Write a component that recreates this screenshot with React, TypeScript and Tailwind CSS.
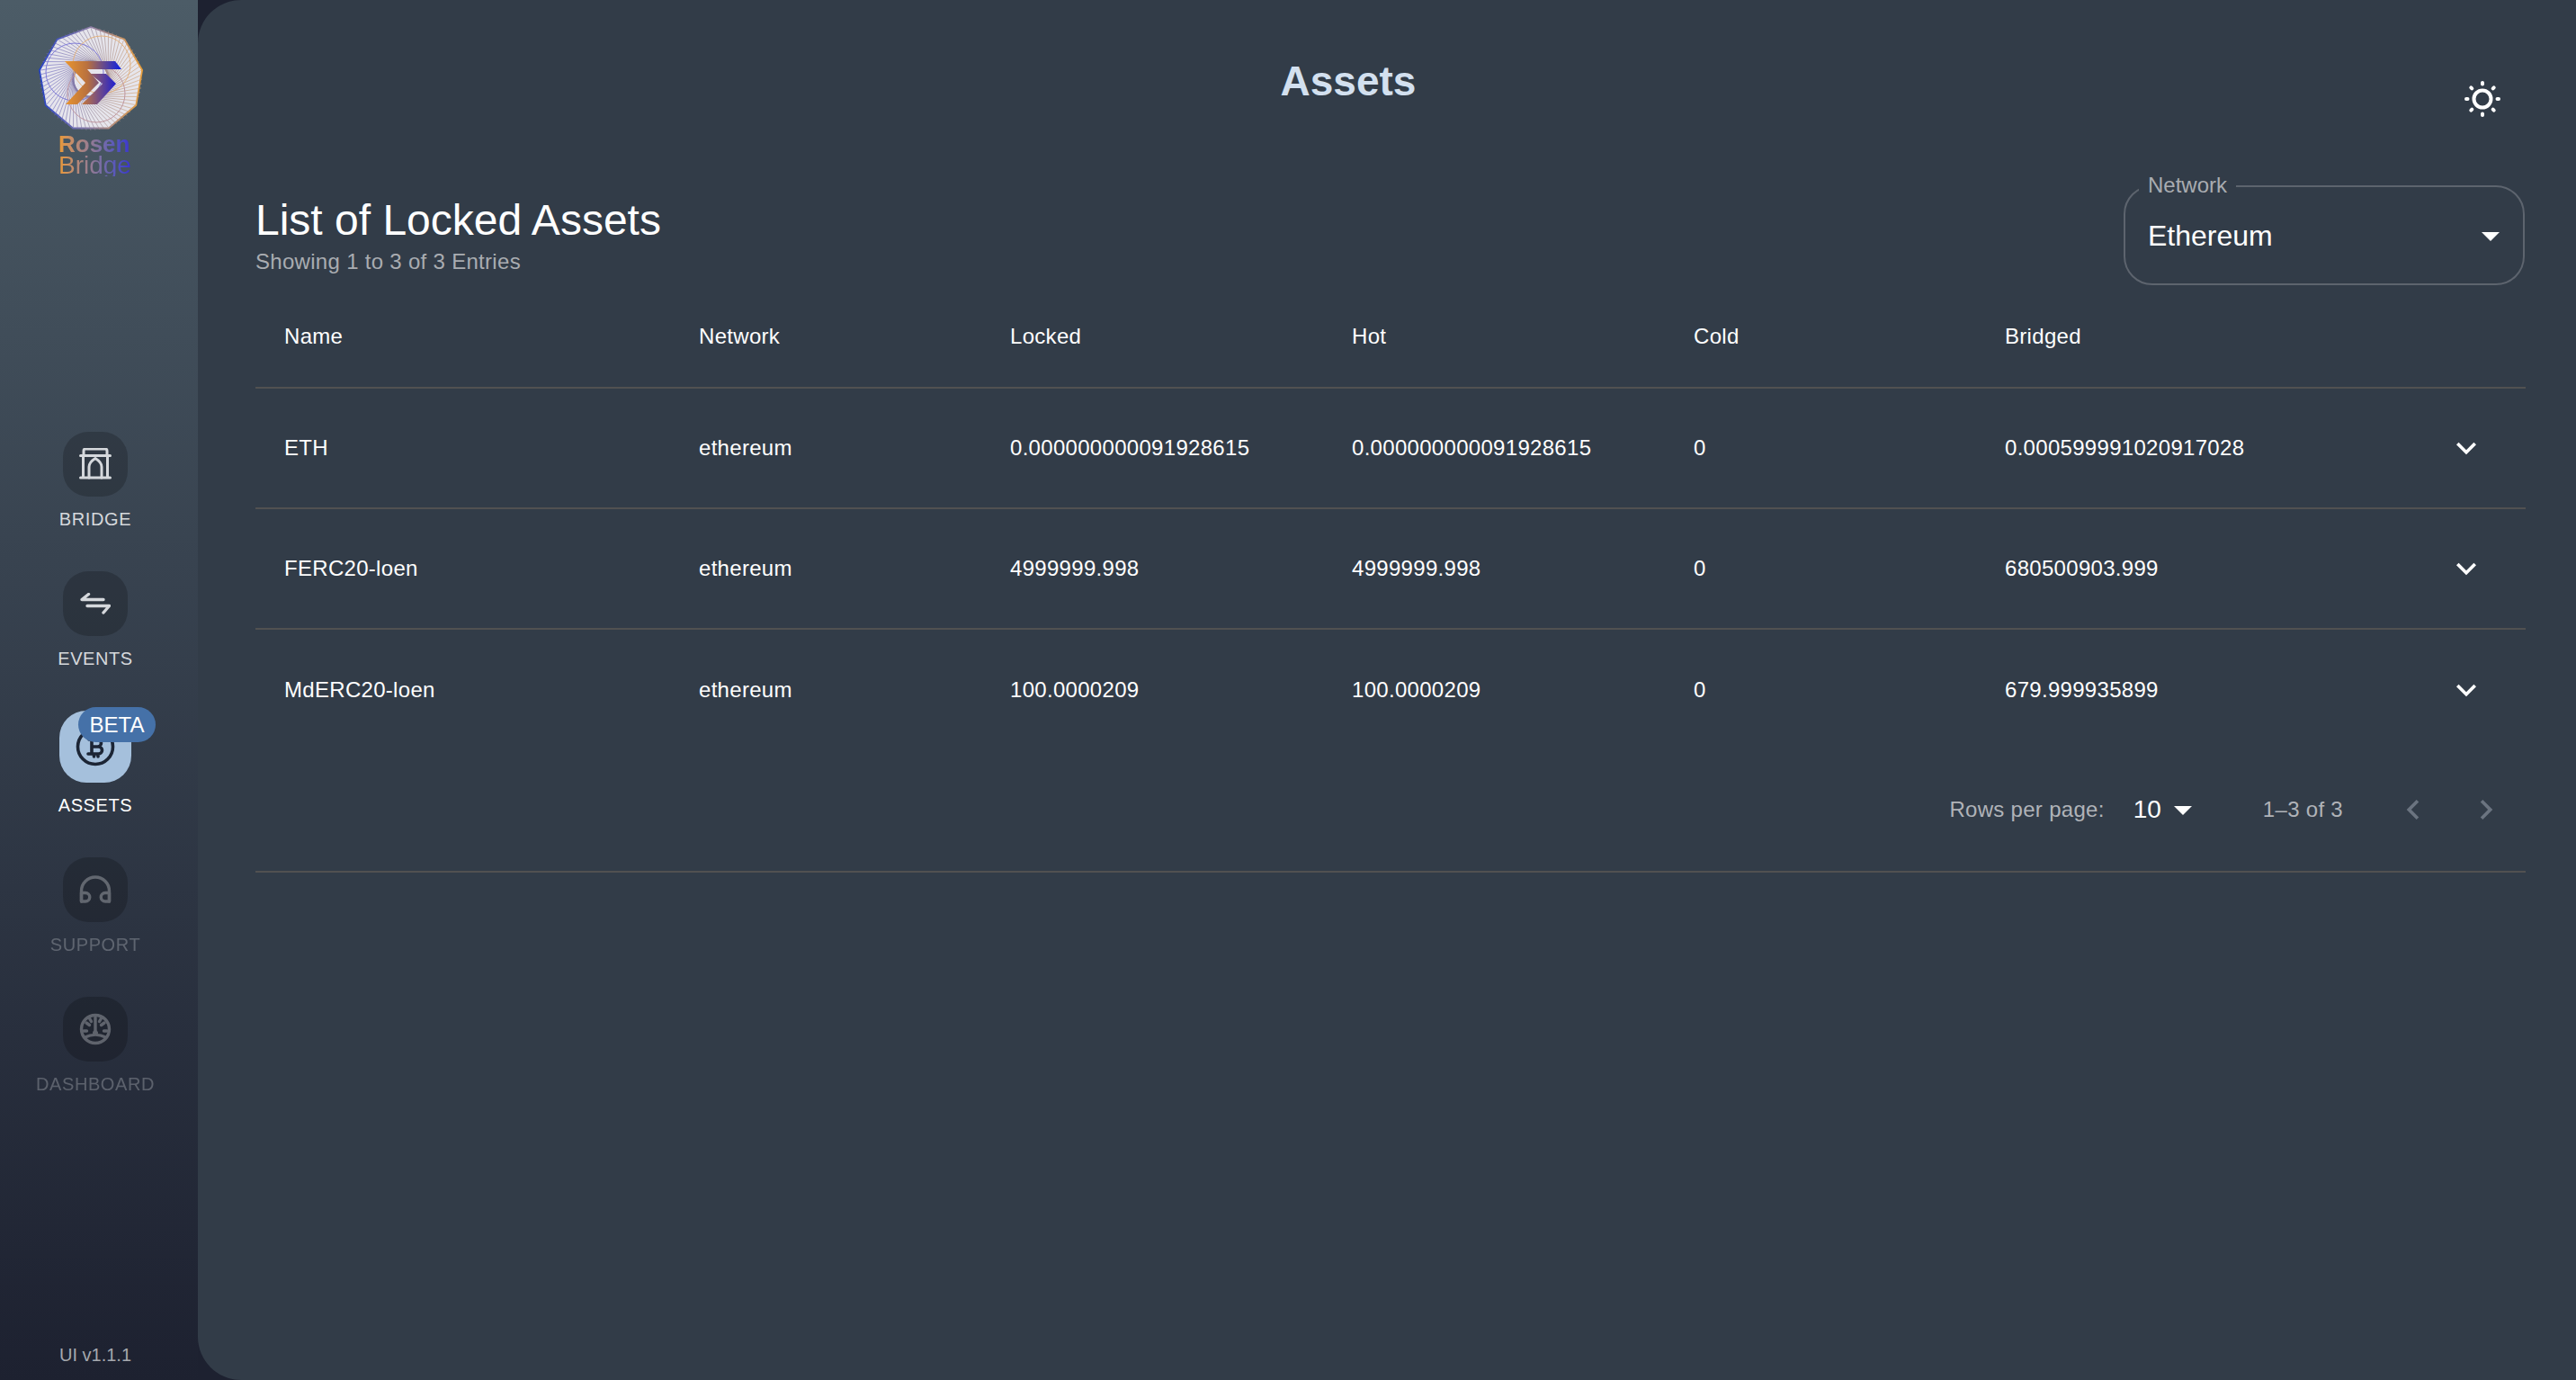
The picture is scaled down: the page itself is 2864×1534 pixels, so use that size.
import type { ReactNode } from "react";

const rows = [
  {
    name: "ETH",
    locked: "0.000000000091928615",
    hot: "0.000000000091928615",
    cold: "0",
    bridged: "0.000599991020917028",
  },
  {
    name: "FERC20-loen",
    locked: "4999999.998",
    hot: "4999999.998",
    cold: "0",
    bridged: "680500903.999",
  },
  {
    name: "MdERC20-loen",
    locked: "100.0000209",
    hot: "100.0000209",
    cold: "0",
    bridged: "679.999935899",
  },
];

const columns = ["Name", "Network", "Locked", "Hot", "Cold", "Bridged"];

// spirograph lines of the logo
const logoLines = Array.from({ length: 72 }, (_, i) => {
  const a = (i * 5 * Math.PI) / 180;
  const b = a + (95 * Math.PI) / 180;
  return {
    x1: 59 + 57 * Math.cos(a),
    y1: 59 + 57 * Math.sin(a),
    x2: 59 + 21 * Math.cos(b),
    y2: 59 + 21 * Math.sin(b),
  };
});

const logoOutline = Array.from({ length: 9 }, (_, i) => {
  const a = ((i * 40 - 90) * Math.PI) / 180;
  return `${59 + 58 * Math.cos(a)},${59 + 58 * Math.sin(a)}`;
}).join(" ");

function Logo() {
  return (
    <svg width="118" height="118" viewBox="0 0 118 118" fill="none">
      <defs>
        <linearGradient id="ring" x1="0" y1="0" x2="118" y2="0" gradientUnits="userSpaceOnUse">
          <stop offset="0" stopColor="#1f3fc4" />
          <stop offset="0.5" stopColor="#8f7fa8" />
          <stop offset="1" stopColor="#eb9f35" />
        </linearGradient>
        <linearGradient id="fan" x1="0" y1="0" x2="118" y2="0" gradientUnits="userSpaceOnUse">
          <stop offset="0" stopColor="#5f5cc8" />
          <stop offset="0.5" stopColor="#8f8298" />
          <stop offset="1" stopColor="#dca468" />
        </linearGradient>
        <linearGradient id="chevA" x1="30" y1="0" x2="93" y2="0" gradientUnits="userSpaceOnUse">
          <stop offset="0" stopColor="#e9952e" />
          <stop offset="0.4" stopColor="#b9713f" />
          <stop offset="1" stopColor="#0a1fe4" />
        </linearGradient>
        <linearGradient id="chevB" x1="49" y1="0" x2="87" y2="0" gradientUnits="userSpaceOnUse">
          <stop offset="0" stopColor="#c87a3a" />
          <stop offset="1" stopColor="#1f20d0" />
        </linearGradient>
      </defs>
      <polygon points={logoOutline} fill="#e6e5ec" stroke="url(#ring)" strokeWidth="1.800" strokeLinejoin="round" />
      {logoLines.map((l, i) => (
        <line key={i} {...l} stroke="url(#fan)" strokeWidth="0.6" />
      ))}
      <circle cx="41" cy="51" r="32" stroke="#7f7bd8" strokeWidth="1" />
      <circle cx="71" cy="43" r="32" stroke="#e3b27e" strokeWidth="1" />
      <circle cx="65" cy="75" r="32" stroke="#bf97a0" strokeWidth="1" />
      <polygon points="30,39 86,39 93,48 55,48 68,63 44,87 31,87 53,63" fill="url(#chevA)" />
      <polygon points="58,53 76,53 87,64 66,87 49,87 72,64" fill="url(#chevB)" />
    </svg>
  );
}

function BridgeIcon() {
  return (
    <svg width="36" height="36" viewBox="0 0 36 36" fill="none" stroke="currentColor" strokeWidth="3" strokeLinecap="round" strokeLinejoin="round">
      <path d="M5 8V3a2 2 0 0 1 2-2h22a2 2 0 0 1 2 2v5" />
      <path d="M1.500 8.500h33M1.500 33h33M4.500 8.500V33M31.500 8.500V33" />
      <path d="M11 33V21c0-4 3-7 7-9.500c4 2.500 7 5.500 7 9.500v12" />
    </svg>
  );
}

function EventsIcon() {
  return (
    <svg width="34" height="24" viewBox="0 0 34 24" fill="none" stroke="currentColor" strokeWidth="3.400" strokeLinecap="round" strokeLinejoin="round">
      <path d="M26 7.500H2L9.500 1.500" />
      <path d="M8 14.500h24.500L26 22" />
    </svg>
  );
}

function AssetsIcon() {
  return (
    <svg width="44" height="44" viewBox="0 0 44 44" fill="none" stroke="currentColor" strokeWidth="3.600" strokeLinecap="round" strokeLinejoin="round">
      <circle cx="22" cy="22" r="19.500" />
      <path d="M15 14h9.500a4 4 0 0 1 0 8H18M18 14v16M18 22h7.500a4 4 0 0 1 0 8H14M20.500 11v3M25 11v3M20.500 30v3M25 30v3" />
    </svg>
  );
}

function SupportIcon() {
  return (
    <svg width="36" height="32" viewBox="0 0 36 32" fill="none" stroke="currentColor" strokeWidth="3.400" strokeLinecap="round" strokeLinejoin="round">
      <path d="M2.500 29V17.500a15.500 15.500 0 0 1 31 0V29" />
      <path d="M2.500 19.500H7a4.500 4.500 0 0 1 0 9.500H2.500zM33.500 19.500H29a4.500 4.500 0 0 0 0 9.500h4.500z" />
    </svg>
  );
}

function DashboardIcon() {
  return (
    <svg width="36" height="36" viewBox="0 0 36 36" fill="none" stroke="currentColor" strokeWidth="3.400" strokeLinecap="round" strokeLinejoin="round">
      <circle cx="18" cy="18" r="15.500" />
      <path d="M18 5v16M8 11l3.500 2.500M28 11l-3.500 2.500M5 20h3.500M31 20h-3.500M11.500 6l2 3.500M24.500 6l-2 3.500M6.500 27c7-3.500 16-3.500 23 0" />
      <circle cx="18" cy="22" r="2.500" fill="currentColor" strokeWidth="1" />
    </svg>
  );
}

function SunIcon() {
  return (
    <svg width="40" height="40" viewBox="0 0 40 40" fill="none" stroke="#fff" strokeLinecap="round">
      <circle cx="20" cy="20" r="9.500" strokeWidth="4" />
      <path
        strokeWidth="4"
        d="M20 2v1.500M20 36.500V38M2 20h1.500M36.500 20H38M7.300 7.300l1 1M31.700 31.700l1 1M7.300 32.700l1-1M31.700 8.300l1-1"
      />
    </svg>
  );
}

function Caret() {
  return (
    <svg width="48" height="48" viewBox="0 0 24 24" fill="#fff">
      <path d="M7 10l5 5 5-5z" />
    </svg>
  );
}

function ChevronDown() {
  return (
    <svg width="44" height="44" viewBox="0 0 24 24" fill="#fff">
      <path d="M7.410 8.590 12 13.170l4.590-4.580L18 10l-6 6-6-6z" />
    </svg>
  );
}

function NavItem({
  label,
  icon,
  active,
  disabled,
}: {
  label: string;
  icon: ReactNode;
  active?: boolean;
  disabled?: boolean;
}) {
  return (
    <div className="flex flex-col items-center">
      <div
        className={
          active
            ? "relative flex h-[80px] w-[80px] items-center justify-center rounded-[30px] bg-[#a5c0dc] text-[#1c2535]"
            : "flex h-[72px] w-[72px] items-center justify-center rounded-[28px] bg-black/20 text-[#d5d8dc]"
        }
      >
        <span className={disabled ? "flex opacity-35" : "flex"}>{icon}</span>
        {active && (
          <span className="absolute left-[21px] top-[-4px] flex h-[39px] w-[86px] items-center justify-center rounded-full bg-[#4571a8] text-[24px] text-white">
            BETA
          </span>
        )}
      </div>
      <span
        className={
          "mt-[13px] text-[20px] leading-[24px] tracking-[0.6px] " +
          (active ? "text-white" : disabled ? "text-[#d5d8dc] opacity-30" : "text-[#d5d8dc]")
        }
      >
        {label}
      </span>
    </div>
  );
}

function Sidebar() {
  return (
    <aside className="flex h-full w-[220px] shrink-0 flex-col bg-gradient-to-b from-[#4c5c67] to-[#1d2130]">
      <div className="pl-[42px] pt-[29px]">
        <Logo />
        <div className="ml-[23px] mt-[1px] w-fit bg-gradient-to-r from-[#ea982f] to-[#3a2fd0] bg-clip-text text-transparent">
          <div className="text-[26px] font-bold leading-[24px]">Rosen</div>
          <div className="text-[28px] leading-[24px]">Bridge</div>
        </div>
      </div>
      <nav className="mt-[284px] flex w-[212px] flex-col gap-[46px]">
        <NavItem label="BRIDGE" icon={<BridgeIcon />} />
        <NavItem label="EVENTS" icon={<EventsIcon />} />
        <NavItem label="ASSETS" icon={<AssetsIcon />} active />
        <NavItem label="SUPPORT" icon={<SupportIcon />} disabled />
        <NavItem label="DASHBOARD" icon={<DashboardIcon />} disabled />
      </nav>
      <div className="mt-auto w-[212px] pb-[16px] text-center text-[20px] leading-[24px] text-[#a5a8ae]">
        UI v1.1.1
      </div>
    </aside>
  );
}

function NetworkSelect() {
  return (
    <div className="relative flex h-[111px] w-[446px] items-center justify-between rounded-[32px] border-2 border-[#5d646e] pl-[25px] pr-[12px]">
      <span className="absolute left-[15px] top-[-14px] bg-[#323c48] px-[10px] text-[24px] leading-[24px] text-[#a9acb1]">
        Network
      </span>
      <span className="text-[32px] text-white">Ethereum</span>
      <Caret />
    </div>
  );
}

function AssetsTable() {
  return (
    <table className="w-full table-fixed border-separate border-spacing-0 text-[24px] tracking-[0.3px] text-white">
      <colgroup>
        <col className="w-[461px]" />
        <col className="w-[346px]" />
        <col className="w-[380px]" />
        <col className="w-[380px]" />
        <col className="w-[346px]" />
        <col className="w-[491px]" />
        <col />
      </colgroup>
      <thead>
        <tr>
          {columns.map((c) => (
            <th key={c} className="h-[115px] border-b-2 border-[#515151] pl-[32px] text-left font-normal">
              {c}
            </th>
          ))}
          <th className="border-b-2 border-[#515151]" />
        </tr>
      </thead>
      <tbody>
        {rows.map((r, i) => {
          const cell = "h-[134px] pl-[32px] " + (i < rows.length - 1 ? "border-b-2 border-[#515151]" : "");
          return (
            <tr key={r.name}>
              <td className={cell}>{r.name}</td>
              <td className={cell}>ethereum</td>
              <td className={cell}>{r.locked}</td>
              <td className={cell}>{r.hot}</td>
              <td className={cell}>{r.cold}</td>
              <td className={cell}>{r.bridged}</td>
              <td className={cell}>
                <ChevronDown />
              </td>
            </tr>
          );
        })}
      </tbody>
    </table>
  );
}

function Pagination() {
  return (
    <div className="flex h-[136px] items-center justify-end border-b-2 border-[#515151] pb-[2px] pr-[22px] text-[24px] tracking-[0.3px] text-[#b0b3b8]">
      <span>Rows per page:</span>
      <span className="ml-[32px] text-[28px] tracking-normal text-white">10</span>
      <Caret />
      <span className="ml-[65px]">1–3 of 3</span>
      <svg className="ml-[56px]" width="44" height="44" viewBox="0 0 24 24" fill="#6b7480">
        <path d="M15.410 7.410 14 6l-6 6 6 6 1.410-1.410L10.830 12z" />
      </svg>
      <svg className="ml-[37px]" width="44" height="44" viewBox="0 0 24 24" fill="#6b7480">
        <path d="M8.590 16.590 13.170 12 8.590 7.410 10 6l6 6-6 6z" />
      </svg>
    </div>
  );
}

export default function App() {
  return (
    <div className="flex h-screen w-full overflow-hidden bg-[#1d2130] [font-family:'Liberation_Sans',Arial,sans-serif]">
      <Sidebar />
      <main className="h-full flex-1 rounded-l-[48px] bg-[#323c48] pl-[64px] pr-[56px] pt-[64px]">
        <header className="flex pr-[2px]">
          <h1 className="flex-1 text-center text-[46px] font-bold leading-[52px] text-[#d3e0ef]">Assets</h1>
          <button type="button" className="flex h-[92px] w-[92px] items-center justify-center">
            <SunIcon />
          </button>
        </header>
        <section className="mt-[50px] flex items-center justify-between pr-[1px]">
          <div>
            <h2 className="text-[48px] leading-[56px] text-white">List of Locked Assets</h2>
            <p className="mt-[2px] text-[24px] leading-[32px] tracking-[0.3px] text-[#a9acb1]">
              Showing 1 to 3 of 3 Entries
            </p>
          </div>
          <NetworkSelect />
        </section>
        <AssetsTable />
        <Pagination />
      </main>
    </div>
  );
}
